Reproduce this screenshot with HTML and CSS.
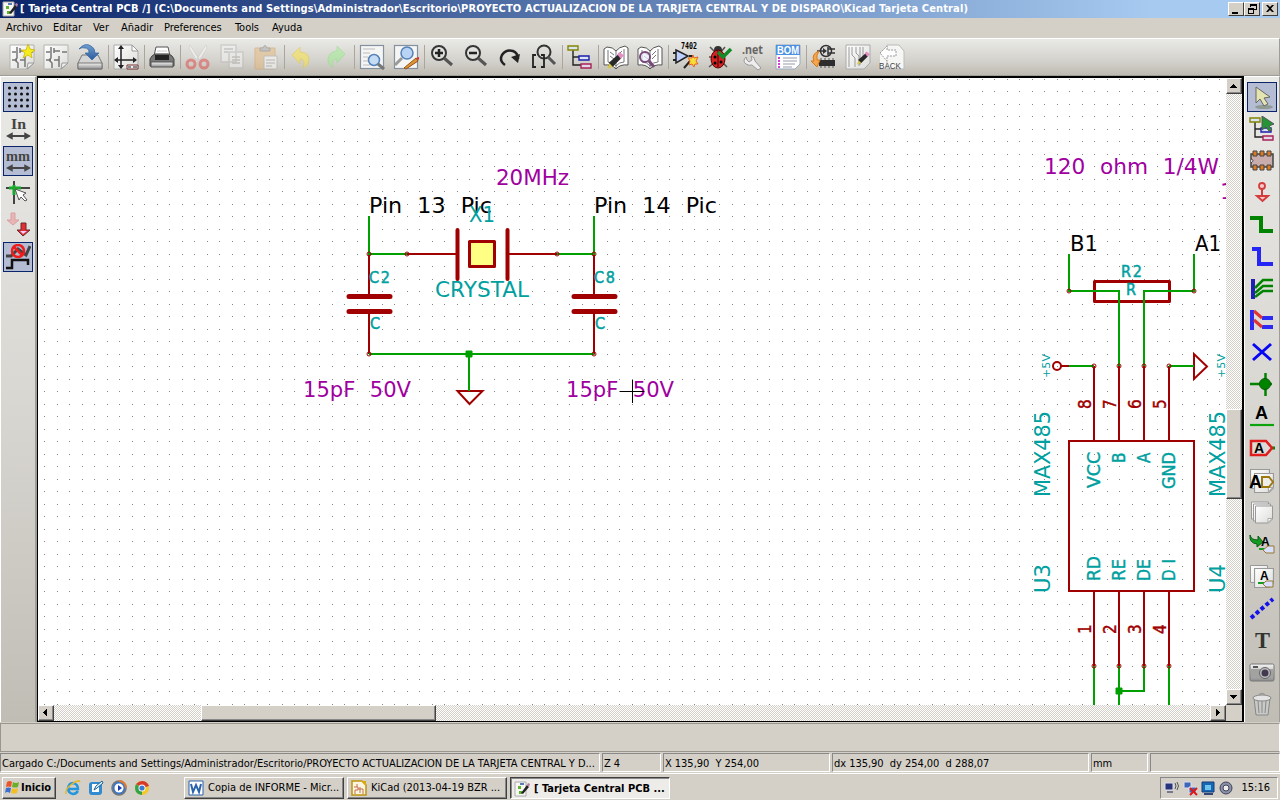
FILE: index.html
```html
<!DOCTYPE html>
<html lang="es">
<head>
<meta charset="utf-8">
<title>Tarjeta Central PCB</title>
<link rel="stylesheet" href="styles.css">
</head>
<body>
<svg class="defs" width="0" height="0">
  <defs>
    <linearGradient id="paper" x1="0" y1="0" x2="1" y2="1"><stop offset="0" stop-color="#fff"/><stop offset="1" stop-color="#dcdcda"/></linearGradient>
    <linearGradient id="metal" x1="0" y1="0" x2="0" y2="1"><stop offset="0" stop-color="#f4f4f4"/><stop offset="1" stop-color="#8d8d8d"/></linearGradient>
    <linearGradient id="blue" x1="0" y1="0" x2="0" y2="1"><stop offset="0" stop-color="#729fcf"/><stop offset="1" stop-color="#2a5a9c"/></linearGradient>
    <symbol id="sheet" viewBox="0 0 26 26"><path d="M1 1h18l6 6v18H1z" fill="url(#paper)" stroke="#aaa"/><path d="M19 1v6h6z" fill="#fff" stroke="#999"/></symbol>
    <symbol id="schem" viewBox="0 0 26 26"><path d="M1 1h24v18l-6 6H1z" fill="url(#paper)" stroke="#b2b2ae"/><path d="M3 8h4M3 16h5M8 3v7M11 4v5M11 7h6M8 10v4l-2 2 3 3v5M11 16h5v-4M16 16v7M19 8h5" fill="none" stroke="#777" stroke-width="1.5"/><path d="M25 19l-7 6 1-6z" fill="#eee" stroke="#999"/></symbol>
    <symbol id="tree" viewBox="0 0 26 26"><path d="M6 6v15h9M6 13h8" fill="none" stroke="#222" stroke-width="1.4"/><path d="M1 2h10v4H1z" fill="#d6e4f6" stroke="#848400" stroke-width="1.4"/><path d="M12 12h10v4H12z" fill="#d6e4f6" stroke="#1c1cac" stroke-width="1.4"/><path d="M14 20h10v4H14z" fill="#e5d6e8" stroke="#a62358" stroke-width="1.4"/></symbol>
    <symbol id="lens" viewBox="0 0 26 26"><circle cx="10" cy="9" r="7" fill="#e4e4e2" fill-opacity=".6" stroke="#363636" stroke-width="2"/><path d="M15 14l8 7" stroke="#555" stroke-width="3"/></symbol>
    <symbol id="book" viewBox="0 0 26 26"><path d="M1 5l3-2q6 0 9 4 3-4 9-5l3 2v17q-8-1-12 4-4-5-12-4z" fill="#fff" stroke="#555"/><path d="M13 7v17M5 6v12q5 0 8 4 3-4 8-4V5M7 8l4 3M7 12l4 3M19 7l-4 4M19 11l-4 4" fill="none" stroke="#777"/></symbol>
    <symbol id="pencil" viewBox="0 0 16 16"><path d="M2 14l1-5 8-7 3 3-8 8z" fill="#292929"/><path d="M10 2l2-2 4 3-3 3z" fill="#e58bc1"/><path d="M1 15l2-5 3 3z" fill="#d9cb4a"/></symbol>
    <symbol id="arrows" viewBox="0 0 26 8"><path d="M0 4l7-4v3h12V0l7 4-7 4V5H7v3z" fill="#454545"/></symbol>
    <symbol id="doc" viewBox="0 0 18 18"><path d="M.5 .5h17v13l-4 4H.5z" fill="url(#paper)" stroke="#999"/><path d="M17 13l-4 4v-4z" fill="#fff" stroke="#aaa"/></symbol>
    <symbol id="eeschema" viewBox="0 0 16 16"><path d="M1 1h11v14H1z" fill="#f7f7f4" stroke="#aaa"/><path d="M6 2h4v2H6z" fill="#5a7bb5"/><path d="M4 5h3v3H4zM5 10h3v3H5z" fill="#62b331"/><path d="M7 12l6-8 2 2-6 7z" fill="#222"/><path d="M13 4l1-2 2 1-1 3z" fill="#b97aa5"/></symbol>
  </defs>
</svg>
<div class="screen">
  <header class="titlebar">
    <svg class="i16" viewBox="0 0 16 16"><use href="#eeschema"/></svg>
    <span class="caption">[ Tarjeta Central PCB /] (C:\Documents and Settings\Administrador\Escritorio\PROYECTO ACTUALIZACION DE LA TARJETA CENTRAL Y DE DISPARO\Kicad Tarjeta Central)</span>
    <div class="winbtns">
      <b class="winbtn"><svg viewBox="0 0 12 10"><path d="M2 8h6v2H2z"/></svg></b>
      <b class="winbtn"><svg viewBox="0 0 12 10"><path d="M4 0h7v6H8V5h2V2H5v1H4zM2 4h6v6H2zM3 6v3h4V6z" fill-rule="evenodd"/></svg></b>
      <b class="winbtn close"><svg viewBox="0 0 12 10"><path d="M2 1h2l2 2 2-2h2L7 4.500 10 8H8L6 6 4 8H2l3-3.500z"/></svg></b>
    </div>
  </header>
  <nav class="menubar"><span class="m1">Archivo</span><span class="m2">Editar</span><span class="m3">Ver</span><span class="m4">Añadir</span><span class="m5">Preferences</span><span class="m6">Tools</span><span class="m7">Ayuda</span></nav>
  <div class="toolbar">
    <svg viewBox="0 0 26 26"><use href="#schem"/><path d="M19 0l2 5 5 1-4 3 1 5-4-3-5 3 2-5-4-3h5z" fill="#f6ec1c" stroke="#c3b000" stroke-width=".7"/></svg>
    <svg viewBox="0 0 26 26"><use href="#schem"/></svg>
    <svg viewBox="0 0 26 26"><path d="M5 11h16l4 8v6H1v-6z" fill="#d5d5d5" stroke="#777"/><path d="M1 19h24v6H1z" fill="url(#metal)" stroke="#777"/><path d="M2 5Q8-2 14 2q4 2 4 7h4l-7 7-7-7h4q0-5-4-5-3-1-6 1z" fill="url(#blue)" stroke="#3465a4" stroke-width=".7"/></svg>
    <i class="sep"></i>
    <svg viewBox="0 0 26 26"><use href="#sheet"/><path d="M8 3v21M3 16h20" stroke="#222" stroke-width="1.500"/><path d="M8 1l3 4H5zM8 25l3-4H5zM1 16l4-3v6zM24 16l-4-3v6z" fill="#222"/><path d="M14 21h11v4H14z" fill="#eee" stroke="#733"/><path d="M15 23h3m2 0h4" stroke="#222"/></svg>
    <i class="sep"></i>
    <svg viewBox="0 0 26 26"><path d="M7 3h12l2 9H5z" fill="#fff" stroke="#555"/><path d="M8 7h10M7 10h12" stroke="#ccc"/><path d="M3 12l3-2h14l3 2 2 3v7H1v-7z" fill="#777" stroke="#444"/><path d="M6 11h14v5H6z" fill="#222"/><path d="M2 18h22v5H2z" fill="url(#metal)" stroke="#555"/></svg>
    <i class="sep"></i>
    <svg class="dim" viewBox="0 0 26 26"><path d="M5 1l11 17-3 1L4 4zM21 1L10 18l3 1 9-15z" fill="#fff" stroke="#ccc"/><circle cx="6" cy="20" r="4" fill="none" stroke="#e04444" stroke-width="3"/><circle cx="19" cy="20" r="4" fill="none" stroke="#e04444" stroke-width="3"/></svg>
    <svg class="dim" viewBox="0 0 26 26"><path d="M2 1h15v17H2zM10 8h14v16H10z" fill="#f6f6f6" stroke="#bbb" stroke-width="1.500"/><path d="M5 5h9M5 8h4M13 13h8M13 16h8M13 19h8" stroke="#aaa" stroke-width="1.500"/></svg>
    <svg class="dim" viewBox="0 0 26 26"><path d="M2 4h20v21H2z" fill="#e8b97a" stroke="#cf9c58"/><path d="M7 7V4h3q2-5 4 0h3v3z" fill="#aaa" stroke="#777"/><path d="M11 12h13v13H11z" fill="#fff" stroke="#aaa"/><path d="M13 16h9m-9 3h9m-9 3h6" stroke="#999"/></svg>
    <i class="sep"></i>
    <svg class="dim undo" viewBox="0 0 26 26"><path d="M5 11L13 3v5q9 0 9 8 0 5-6 8 3-9-3-9v5z" fill="#ffe53b" stroke="#e5cb31"/></svg>
    <svg class="dim" viewBox="0 0 26 26"><path d="M22 10L14 2v5Q5 8 5 16q0 5 5 7-2-8 4-8v4z" fill="#9bf08d" stroke="#8bdc82"/></svg>
    <i class="sep"></i>
    <svg viewBox="0 0 26 26"><rect x="1.500" y="1.500" width="23" height="23" fill="#f5f5f4" stroke="#8492a0" stroke-width="1.200"/><path d="M4 5h12M4 9h7M4 13h5M4 17h6M4 21h7" stroke="#bbb" stroke-width="1.200"/><circle cx="15" cy="16" r="5.500" fill="#c6dcf4" stroke="#5381b8" stroke-width="1.500"/><path d="M19 20l6 5" stroke="#777" stroke-width="3"/></svg>
    <svg viewBox="0 0 26 26"><rect x="1.500" y="1.500" width="23" height="23" fill="#f5f5f4" stroke="#8492a0" stroke-width="1.200"/><circle cx="14" cy="9" r="6" fill="#b8d3f3" stroke="#5381b8" stroke-width="1.500"/><path d="M9 14l-7 7" stroke="#999" stroke-width="3"/><path d="M11 24L23 14l2 3-12 8z" fill="#dc9635" stroke="#965017"/><path d="M23 14l3-1v3z" fill="#e22"/></svg>
    <i class="sep"></i>
    <svg viewBox="0 0 26 26"><use href="#lens"/><path d="M6 9h8M10 5v8" stroke="#222" stroke-width="2.500"/></svg>
    <svg viewBox="0 0 26 26"><use href="#lens"/><path d="M6 9h8" stroke="#222" stroke-width="2.500"/></svg>
    <svg viewBox="0 0 26 26"><path d="M8 21Q2 17 5 11q4-6 11-4 5 2 5 8" fill="none" stroke="#222" stroke-width="2.500"/><path d="M14 13l7 6 2-9z" fill="#222"/></svg>
    <svg viewBox="0 0 26 26"><circle cx="13" cy="8" r="6.500" fill="none" stroke="#333" stroke-width="2"/><path d="M17 13l7 7" stroke="#555" stroke-width="3"/><path d="M5 11H2v12h3M10 11h3v12h-3" fill="none" stroke="#222" stroke-width="1.800"/></svg>
    <i class="sep"></i>
    <svg viewBox="0 0 26 26"><use href="#tree"/></svg>
    <i class="sep"></i>
    <svg viewBox="0 0 26 26"><use href="#book"/><use href="#pencil" x="3" y="8" width="18" height="18"/></svg>
    <svg viewBox="0 0 26 26"><use href="#book"/><circle cx="8" cy="13" r="5" fill="#eef" fill-opacity=".7" stroke="#764a78" stroke-width="2"/><path d="M12 17l5 6" stroke="#764a78" stroke-width="3"/></svg>
    <i class="sep"></i>
    <svg viewBox="0 0 26 26"><path d="M3 6l12 6-12 7z" fill="#bdd0ff" stroke="#222" stroke-width="1.500"/><path d="M0 9h3m-3 7h3M16 12h4M11 24l7-8" stroke="#222" stroke-width="2"/><path d="M20 11l1 3 4-1-2 4 2 3h-3l-1 3-2-3-3 1 1-4-2-3h4z" fill="#f7dd35" stroke="#e66124"/><text x="8" y="5" class="tiny" textLength="16" lengthAdjust="spacingAndGlyphs">7402</text></svg>
    <svg viewBox="0 0 26 26"><path d="M3 3l5 5M18 3l-4 5M2 13h6M2 23l6-5M20 23l-5-5" stroke="#555" stroke-width="1.500"/><circle cx="11" cy="6" r="4" fill="#333"/><ellipse cx="11" cy="15" rx="7" ry="9" fill="#d52222" stroke="#500"/><path d="M11 7v16" stroke="#300"/><circle cx="8" cy="13" r="1.500"/><circle cx="8" cy="19" r="1.500"/><circle cx="14" cy="18" r="1.500"/><path d="M11 8l5 5 8-8" fill="none" stroke="#148a28" stroke-width="3.500"/></svg>
    <svg viewBox="0 0 26 26"><text x="1" y="10" class="net" textLength="21" lengthAdjust="spacingAndGlyphs">.net</text><path d="M5 13q-4 4 0 7 3 2 6 1l6 5 3-2-6-7q0-4-4-5l1 4-3 2-2-2z" fill="#eee" stroke="#999"/></svg>
    <svg viewBox="0 0 26 26"><path d="M1 1h24v19l-5 5H1z" fill="#fff" stroke="#9ab"/><path d="M1 1h24v10H1z" fill="#4c91e2"/><text x="2" y="10" class="bom" textLength="22" lengthAdjust="spacingAndGlyphs">BOM</text><path d="M3 14h2m-2 3h2m-2 3h2m-2 3h2" stroke="#c0c" stroke-width="1.500"/><path d="M8 14h14M8 17h14M8 20h12M8 23h9" stroke="#99a"/></svg>
    <i class="sep"></i>
    <svg viewBox="0 0 26 26"><circle cx="15" cy="7" r="5.500" fill="#ddd" stroke="#333" stroke-width="1.500"/><path d="M6 7h6M17 5h7M17 9h7M17 3v8" fill="none" stroke="#333" stroke-width="1.500"/><path d="M12 4v6l4-3z" fill="#333"/><path d="M8 16h16v6H8z" fill="#2d2d2d"/><path d="M10 22v2m4-2v2m4-2v2m4-2v2M10 14v2m4-2v2m4-2v2m4-2v2" stroke="#555"/><path d="M8 7Q0 10 3 17L0 17l6 6 3-7H6q-1-5 2-9z" fill="#f3a64e" stroke="#d57918"/></svg>
    <svg viewBox="0 0 26 26"><path d="M1 1h24v18l-6 6H1z" fill="url(#paper)" stroke="#aaa"/><path d="M4 3v20M7 3v8l3 3v9M11 3v6l3 3v10M15 3v18M18 3v12" fill="none" stroke="#999"/><use href="#pencil" x="11" y="6" width="14" height="17"/></svg>
    <svg viewBox="0 0 26 26"><path d="M8 1h12l5 6v18H1V11z" fill="#f6f6f5"/><path d="M20 1l5 6v18H8V17M20 1H8v4" fill="none" stroke="#bbb"/><path d="M1 9l7-7v4h9v6H8v5z" fill="#fff" stroke="#999" stroke-dasharray="2 1"/><text x="0" y="25" class="back" textLength="22" lengthAdjust="spacingAndGlyphs">BACK</text></svg>
  </div>
  <main class="work">
    <aside class="side left">
      <b class="tool on"><svg viewBox="0 0 26 26"><path d="M4.500 4h18.100M4.500 10h18.100M4.500 16h18.100M4.500 22h18.100" stroke="#111" stroke-width="3" stroke-linecap="round" stroke-dasharray="0 6"/></svg></b>
      <b class="tool"><svg viewBox="0 0 26 26"><text x="6" y="13" class="unit" textLength="15" lengthAdjust="spacingAndGlyphs">In</text><use href="#arrows" x="1" y="16" width="25" height="8"/></svg></b>
      <b class="tool on"><svg viewBox="0 0 26 26"><text x="1" y="13" class="unit" textLength="24" lengthAdjust="spacingAndGlyphs">mm</text><use href="#arrows" x="1" y="16" width="25" height="8"/></svg></b>
      <b class="tool"><svg viewBox="0 0 26 26"><path d="M9 1v23M1 8h24" stroke="#444" stroke-width="2"/><path d="M9 5v10M4 8h12" stroke="#18a82b" stroke-width="3"/><path d="M10 9l11 4-3 2 4 5-2 1-4-4-2 3z" fill="#fff" stroke="#555"/></svg></b>
      <b class="tool"><svg viewBox="0 0 26 26"><path d="M6 1h4v7h4l-6 5-6-5h4z" fill="#e8b4b4" stroke="#d7a1a1"/><path d="M16 11h5v7h4l-7 6-6-6h4z" fill="#e22d32" stroke="#672b2b"/><path d="M15 19h7l-4 3z" fill="#f0caff"/></svg></b>
      <b class="tool on"><svg viewBox="0 0 26 26"><path d="M1 12h5l7-7 8 6 4-9" fill="none" stroke="#444" stroke-width="3"/><path d="M1 24h6v-8h16v5" fill="none" stroke="#111" stroke-width="2.500"/><circle cx="13" cy="7" r="6" fill="none" stroke="#ef1c1c" stroke-width="2.500"/><path d="M9 3l8 8" stroke="#ef1c1c" stroke-width="2.500"/></svg></b>
    </aside>
    <section class="view">
      <svg class="schematic" viewBox="38 78 1188 627">
        <defs><pattern id="grid" width="25" height="25" patternUnits="userSpaceOnUse"><path d="M19 4h1v1h-1zM7 4h1v1H7zM19 16h1v1h-1zM7 16h1v1H7z" fill="#848484"/></pattern></defs>
        <path d="M38 78h1188v627H38z" fill="url(#grid)" shape-rendering="crispEdges"/>
        <g class="part">
          <path d="M369 254v40M369 313v41M594 254v40M594 313v41M407 254h50M507 254h50M1069 366h-8M1094 366v75M1119 366v75M1144 366v75M1169 366v75M1094 591v75M1119 591v75M1144 591v75M1169 591v75M1069 441h125v150h-125z"/>
          <path class="plate" d="M349 296.500h41M349 311.500h41M574 296.500h41M574 311.500h41"/>
          <path class="thick" d="M457.500 230v49M507.500 230v49"/>
          <path class="body" d="M469.500 241.500h25v25h-25z"/>
          <path class="res" d="M1094.500 281.500h75v20h-75z"/>
          <path d="M457.500 391h25L469.500 404zM1194 354v25l13-12.500z"/>
          <circle cx="1057" cy="366" r="4"/>
        </g>
        <path class="wire" d="M369 216v38h38M557 254h37v-38M369 354h225M469 354v37M1069 254v37h50v75M1194 254v37h-50v75M1069 366h25M1169 366h25M1094 666v39M1119 666v39M1144 666v25h-25M1169 666v39"/>
        <path class="joint" d="M466 351h6v6h-6zM1116 688h6v6h-6z"/>
        <g class="ends"><circle cx="369" cy="254" r="2"/><circle cx="407" cy="254" r="2"/><circle cx="557" cy="254" r="2"/><circle cx="594" cy="254" r="2"/><circle cx="369" cy="354" r="2"/><circle cx="594" cy="354" r="2"/><circle cx="1069" cy="291" r="2"/><circle cx="1194" cy="291" r="2"/><circle cx="1094" cy="366" r="2"/><circle cx="1119" cy="366" r="2"/><circle cx="1144" cy="366" r="2"/><circle cx="1169" cy="366" r="2"/><circle cx="1094" cy="666" r="2"/><circle cx="1119" cy="666" r="2"/><circle cx="1144" cy="666" r="2"/><circle cx="1169" cy="666" r="2"/></g>
        <g class="note">
          <text x="496" y="185" textLength="73" lengthAdjust="spacingAndGlyphs">20MHz</text>
          <text x="303" y="397" textLength="108" lengthAdjust="spacingAndGlyphs">15pF 50V</text>
          <text x="566" y="397" textLength="108" lengthAdjust="spacingAndGlyphs">15pF 50V</text>
          <text x="1044" y="174" textLength="175" lengthAdjust="spacingAndGlyphs">120 ohm 1/4W</text>
          <text x="1220" y="199">1</text>
        </g>
        <g class="label">
          <text x="369" y="213" textLength="123" lengthAdjust="spacingAndGlyphs">Pin 13 Pic</text>
          <text x="594" y="213" textLength="123" lengthAdjust="spacingAndGlyphs">Pin 14 Pic</text>
          <text x="1070" y="251" textLength="28" lengthAdjust="spacingAndGlyphs">B1</text>
          <text x="1195" y="251" textLength="26" lengthAdjust="spacingAndGlyphs">A1</text>
        </g>
        <g class="field">
          <text x="469" y="222" textLength="26" lengthAdjust="spacingAndGlyphs">X1</text>
          <text x="435" y="297" textLength="94" lengthAdjust="spacingAndGlyphs">CRYSTAL</text>
          <g class="small"><text x="369" y="283" textLength="21">C2</text><text x="594" y="283" textLength="21">C8</text><text x="370" y="329">C</text><text x="595" y="329">C</text><text x="1121" y="277" textLength="21">R2</text><text x="1126" y="295">R</text></g>
          <g class="power"><text transform="translate(1050 378) rotate(-90)" textLength="24">+5V</text><text transform="translate(1225 378) rotate(-90)" textLength="24">+5V</text></g>
          <text transform="translate(1050 497) rotate(-90)" textLength="86" lengthAdjust="spacingAndGlyphs">MAX485</text>
          <text transform="translate(1225 497) rotate(-90)" textLength="86" lengthAdjust="spacingAndGlyphs">MAX485</text>
          <text transform="translate(1050 593) rotate(-90)" textLength="29" lengthAdjust="spacingAndGlyphs">U3</text>
          <text transform="translate(1225 593) rotate(-90)" textLength="29" lengthAdjust="spacingAndGlyphs">U4</text>
          <g class="pin">
            <text transform="translate(1100 488) rotate(-90)" textLength="36" lengthAdjust="spacingAndGlyphs">VCC</text>
            <text transform="translate(1125 463) rotate(-90)">B</text>
            <text transform="translate(1150 463) rotate(-90)">A</text>
            <text transform="translate(1175 489) rotate(-90)" textLength="37" lengthAdjust="spacingAndGlyphs">GND</text>
            <text transform="translate(1100 581) rotate(-90)" textLength="25" lengthAdjust="spacingAndGlyphs">RD</text>
            <text transform="translate(1125 581) rotate(-90)" textLength="22" lengthAdjust="spacingAndGlyphs">RE</text>
            <text transform="translate(1150 581) rotate(-90)" textLength="22" lengthAdjust="spacingAndGlyphs">DE</text>
            <text transform="translate(1175 581) rotate(-90)" textLength="22" lengthAdjust="spacing">DI</text>
          </g>
        </g>
        <g class="num">
          <text transform="translate(1091 409) rotate(-90)">8</text><text transform="translate(1116 409) rotate(-90)">7</text><text transform="translate(1141 409) rotate(-90)">6</text><text transform="translate(1166 409) rotate(-90)">5</text>
          <text transform="translate(1091 634) rotate(-90)">1</text><text transform="translate(1116 634) rotate(-90)">2</text><text transform="translate(1141 634) rotate(-90)">3</text><text transform="translate(1166 634) rotate(-90)">4</text>
        </g>
        <path class="cursor" d="M620 391.500h24M632.500 380v23"/>
      </svg>
      <div class="vscroll"><b class="sbtn"><svg viewBox="0 0 14 14"><path d="M3 9h7v-1H9V7H8V6H7V5H6v1H5v1H4v1H3z"/></svg></b><b class="vthumb"></b><b class="sbtn end"><svg viewBox="0 0 14 14"><path d="M3 5h7v1H9v1H8v1H7v1H6V8H5V7H4V6H3z"/></svg></b></div>
      <div class="hscroll"><b class="sbtn"><svg viewBox="0 0 14 14"><path d="M8 3v7H7V9H6V8H5V7H4V6h1V5h1V4h1V3z"/></svg></b><b class="hthumb"></b><b class="sbtn end"><svg viewBox="0 0 14 14"><path d="M5 3v7h1V9h1V8h1V7h1V6H8V5H7V4H6V3z"/></svg></b></div>
      <div class="corner"></div>
    </section>
    <aside class="side right">
      <b class="tool on"><svg viewBox="0 0 26 26"><ellipse cx="15" cy="23" rx="9" ry="2" fill="#8e9a92"/><path d="M7 3l14 10-6 1 4 6-4 2-4-7-4 4z" fill="#e4e4b0" stroke="#666"/></svg></b>
      <b class="tool"><svg viewBox="0 0 26 26"><use href="#tree"/><path d="M13 0l12 8-5 2 3 4-3 1-3-4-4 3z" fill="#249436" stroke="#555"/></svg></b>
      <b class="tool"><svg viewBox="0 0 26 26"><path d="M2 6h22v13H2z" fill="#c9adad" stroke="#444" stroke-width="1.500"/><g fill="#df7a1e" stroke="#444"><path d="M4 3h4v5H4zM11 3h4v5h-4zM18 3h4v5h-4zM4 17h4v5H4zM11 17h4v5h-4zM18 17h4v5h-4z"/></g><path d="M2 11q4 1 0 4" fill="#ddd" stroke="#444"/></svg></b>
      <b class="tool"><svg viewBox="0 0 26 26"><circle cx="13" cy="6" r="3" fill="#f7caca" stroke="#d33d3d" stroke-width="1.800"/><path d="M13 9v8M8 16h11l-5.500 5z" fill="#f7caca" stroke="#d33d3d" stroke-width="2"/></svg></b>
      <b class="tool"><svg viewBox="0 0 26 26"><path d="M1 6h11v13h12" fill="none" stroke="#008400" stroke-width="4"/></svg></b>
      <b class="tool"><svg viewBox="0 0 26 26"><path d="M3 5h7v15h14" fill="none" stroke="#2525f5" stroke-width="4"/></svg></b>
      <b class="tool"><svg viewBox="0 0 26 26"><path d="M4 3v20" stroke="#2020b8" stroke-width="4"/><path d="M6 12l8-8h10M6 17l8-7h10M6 21l8-6h10" fill="none" stroke="#008400" stroke-width="2.500"/></svg></b>
      <b class="tool"><svg viewBox="0 0 26 26"><path d="M3 2v20M13 10h11M13 19h11" stroke="#2b2bf4" stroke-width="4"/><path d="M5 3l8 7M5 12l8 7" stroke="#df3434" stroke-width="3"/></svg></b>
      <b class="tool"><svg viewBox="0 0 26 26"><path d="M4 4l18 16M22 4L4 20" stroke="#0606f4" stroke-width="3"/></svg></b>
      <b class="tool"><svg viewBox="0 0 26 26"><path d="M1 12h22M16.500 1v23" stroke="#008400" stroke-width="2.500"/><circle cx="16" cy="12" r="5.500" fill="#008400" stroke="#055c05"/></svg></b>
      <b class="tool"><svg viewBox="0 0 26 26"><text x="6" y="15" class="letter" textLength="13">A</text><path d="M1 21h24" stroke="#0ca30c" stroke-width="2.200"/></svg></b>
      <b class="tool"><svg viewBox="0 0 26 26"><path d="M22 12h4" stroke="#008400" stroke-width="3"/><path d="M2 5h15l6 7-6 7H2z" fill="#fff" fill-opacity=".2" stroke="#e01c1c" stroke-width="2.500"/><text x="5" y="17" class="letter md">A</text></svg></b>
      <b class="tool"><svg viewBox="0 0 26 26"><use href="#doc" x="1" y="0" width="20" height="22"/><use href="#doc" x="5" y="4" width="20" height="22"/><text x="0" y="20" class="letter">A</text><path d="M13 9h7l4 5-4 5h-7z" fill="#eee" stroke="#9c7a10" stroke-width="2"/></svg></b>
      <b class="tool"><svg viewBox="0 0 26 26"><use href="#doc" x="2" y="1" width="18" height="19"/><use href="#doc" x="4" y="3" width="18" height="19"/><use href="#doc" x="6" y="5" width="18" height="19"/></svg></b>
      <b class="tool"><svg viewBox="0 0 26 26"><path d="M1 3q1 5 8 5V4l5 6-6 5v-3Q0 11 1 3z" fill="#139c22" stroke="#075b12"/><text x="12" y="14" class="letter sm">A</text><path d="M10 17h6" stroke="#139c22" stroke-width="2"/><path d="M19 14h6v7h-8l-3-3z" fill="#d9dfff" stroke="#99782d"/></svg></b>
      <b class="tool"><svg viewBox="0 0 26 26"><use href="#doc" x="1" y="1" width="18" height="18"/><use href="#doc" x="5" y="4" width="20" height="20"/><text x="11" y="16" class="letter sm">A</text><path d="M9 19h6" stroke="#139c22" stroke-width="2"/><path d="M17 17h7v6h-7l-3-3z" fill="#d9dfff" stroke="#99782d"/></svg></b>
      <b class="tool"><svg viewBox="0 0 26 26"><path d="M2 22L24 3" stroke="#1414e8" stroke-width="4" stroke-dasharray="4 2.500"/></svg></b>
      <b class="tool"><svg viewBox="0 0 26 26"><text x="6" y="20" class="tee" textLength="15" lengthAdjust="spacingAndGlyphs">T</text></svg></b>
      <b class="tool"><svg viewBox="0 0 26 26"><rect x="1" y="4" width="24" height="17" rx="1.500" fill="url(#metal)" stroke="#777"/><path d="M2 9h22v8H2z" fill="#a2a2a0"/><circle cx="16" cy="13" r="5.500" fill="#bbb" stroke="#666"/><circle cx="16" cy="13" r="3.500" fill="#423950"/><path d="M4 6h5v2H4z" fill="#555"/></svg></b>
      <b class="tool"><svg viewBox="0 0 26 26"><path d="M5 6h16l-2 17H7z" fill="#c9c9c7" stroke="#888"/><path d="M9 9l1 12M13 9v12M17 9l-1 12" stroke="#888"/><ellipse cx="13" cy="6" rx="9" ry="3" fill="#e4e4e4" stroke="#888"/><path d="M10 3q3-3 6 0" fill="none" stroke="#999" stroke-width="1.500"/></svg></b>
    </aside>
  </main>
  <div class="msgpanel"></div>
  <div class="statusbar"><span class="s1">Cargado C:/Documents and Settings/Administrador/Escritorio/PROYECTO ACTUALIZACION DE LA TARJETA CENTRAL Y D...</span><span class="s2">Z 4</span><span class="s3">X 135,90&nbsp; Y 254,00</span><span class="s4">dx 135,90&nbsp; dy 254,00&nbsp; d 288,07</span><span class="s5">mm</span><span class="s6"></span></div>
  <footer class="taskbar">
    <b class="start"><svg class="i16" viewBox="0 0 16 16"><path d="M3 2q3-2 5 0L7 7Q4 6 2 7z" fill="#e9562b"/><path d="M9 2q3 2 6 0l-1 5q-3 1-6 0z" fill="#6bae2b"/><path d="M2 8q3-1 5 0l-1 5q-3-2-5 0z" fill="#3b70d2"/><path d="M8 8q3 2 6 0l-1 5q-3 1-6 0z" fill="#f3bd25"/></svg><span>Inicio</span></b>
    <div class="quick">
      <svg viewBox="0 0 16 16"><path d="M13 11q-2 3-5 3-5-1-5-6 1-5 5-5 5 1 5 6H4" fill="none" stroke="#2496dd" stroke-width="2.500"/><path d="M1 14Q0 9 7 4t8-2" fill="none" stroke="#e6b725" stroke-width="1.500"/></svg>
      <svg viewBox="0 0 16 16"><rect x="1" y="2" width="13" height="13" rx="3" fill="#328bd0"/><path d="M4 4h7v8H4z" fill="#fff"/><path d="M6 10l2-4 6-5 1 2-6 5z" fill="#e9f6ff" stroke="#176194"/></svg>
      <svg viewBox="0 0 16 16"><circle cx="8" cy="8" r="7" fill="#3977c9" stroke="#777" stroke-width="1.500"/><path d="M8 1a7 7 0 0 1 7 7" stroke="#e17a2e" stroke-width="2" fill="none"/><circle cx="8" cy="8" r="4.500" fill="#fff"/><path d="M7 5l4 3-4 3z" fill="#173cb5"/></svg>
      <svg viewBox="0 0 16 16"><circle cx="8" cy="8" r="7" fill="#f4c927"/><path d="M8 8L2 4Q5 1 8 1q5 0 7 5z" fill="#d83a29"/><path d="M2 4L8 9v6Q1 14 1 8q0-2 1-4z" fill="#32a34a"/><circle cx="8" cy="8" r="3.500" fill="#fff"/><circle cx="8" cy="8" r="2.600" fill="#3d7bd3"/></svg>
    </div>
    <b class="task"><svg class="i16" viewBox="0 0 16 16"><path d="M1 1h14v14H1z" fill="#fff" stroke="#2a62ac"/><path d="M3 4l2 8 3-7 3 7 2-8" fill="none" stroke="#2a62ac" stroke-width="2"/></svg><span>Copia de INFORME - Micr...</span></b>
    <b class="task kicad"><svg class="i16" viewBox="0 0 16 16"><path d="M1 1h10l4 4v10H1z" fill="#f9f5df" stroke="#bd940d" stroke-width="1.500"/><path d="M10 1h5v5z" fill="#d8aa12"/><path d="M3 7h4v3H4v4M6 4v3M7 9h5v5M9 7v6" fill="none" stroke="#c36f53"/></svg><span>KiCad (2013-04-19 BZR ...</span></b>
    <b class="task active"><svg class="i16" viewBox="0 0 16 16"><use href="#eeschema"/></svg><span>[ Tarjeta Central PCB ...</span></b>
    <div class="tray">
      <svg viewBox="0 0 16 16"><path d="M1 3h8v7H1z" fill="#26357b" stroke="#dde"/><path d="M3 12h6" stroke="#778" stroke-width="2"/><path d="M11 3q2 3 0 6M13 2q3 4 0 8" fill="none" stroke="#555"/></svg>
      <svg viewBox="0 0 16 16"><path d="M2 2h7v6H2zM7 7h7v6H7z" fill="#3d67b7" stroke="#dde"/><path d="M8 8l7 7M15 8l-7 7" stroke="#dc1818" stroke-width="2"/></svg>
      <svg viewBox="0 0 16 16"><path d="M2 2h12v10H2z" fill="#1768b4" stroke="#173e79"/><path d="M5 5h6v5H5z" fill="#6fc4ed"/><path d="M4 14h9" stroke="#347" stroke-width="2"/></svg>
      <svg viewBox="0 0 16 16"><circle cx="8" cy="8" r="6" fill="#888faa" stroke="#445"/><circle cx="8" cy="8" r="3" fill="#eee" stroke="#445"/></svg>
      <time>15:16</time>
    </div>
  </footer>
</div>
</body>
</html>
```
FILE: styles.css
```css
* { box-sizing: border-box; }
body { margin: 0; background: #d4d0c8; color: #000; font: 11px/14px "DejaVu Sans Condensed", "DejaVu Sans", sans-serif; font-stretch: condensed; }
b { font-weight: normal; }
.defs { display: block; height: 0; }
.screen { display: flex; flex-direction: column; width: 1280px; height: 800px; overflow: hidden; white-space: nowrap; }
.i16 { width: 16px; height: 16px; flex: none; }
.titlebar { display: flex; align-items: center; flex: none; height: 18px; padding: 0 2px; background: linear-gradient(90deg, #0a246a, #a6caf0 90%); color: #fff; font-weight: bold; }
.caption { flex: 1; margin-left: 2px; letter-spacing: .125px; }
.winbtns { display: flex; }
.winbtn { display: flex; width: 16px; height: 14px; padding: 1px; background: #d4d0c8; border: 1px solid; border-color: #fff #404040 #404040 #fff; }
.winbtn svg { width: 12px; height: 10px; }
.close { margin-left: 2px; }
.menubar { display: flex; flex: none; gap: 12px; height: 20px; padding: 3px 6px; }
.m1 { width: 35px; } .m2 { width: 28px; } .m3 { width: 16px; } .m4 { width: 31px; } .m5 { width: 59px; } .m6 { width: 25px; } .m7 { width: 31px; }
.menubar span { letter-spacing: -.05px; }
.toolbar { display: flex; align-items: center; flex: none; height: 38px; padding: 0 5px; background: linear-gradient(#e9e9e6, #d2d0ca 65%, #bebab1); border: solid; border-width: 1px 1px 1px 0; border-color: #fff #a09d96 #a09d96; }
.toolbar svg { width: 26px; height: 26px; margin: 0 4px; flex: none; overflow: visible; }
.toolbar .undo { transform: translateX(-2px); }
.sep { width: 1px; height: 24px; margin: 0 0 0 1px; background: #aaa69e; flex: none; }
.dim { opacity: .5; }
.tiny { font: bold 8px "DejaVu Sans Mono", monospace; }
.net { font: bold 13px "Open Sans", sans-serif; fill: #666; }
.bom { font: bold 11px "Liberation Sans", sans-serif; fill: #fff; }
.back { font: 9px "Liberation Sans", sans-serif; fill: #444; }
.work { display: flex; flex: none; height: 646px; }
.side { display: flex; flex-direction: column; gap: 2px; flex: none; width: 37px; padding: 5px 0 0 3px; background: linear-gradient(#e9e9e6, #d9d7d2 50%, #c0bdb5); border-left: 1px solid #fff; border-top: 1px solid #fff; border-right: 2px solid #a09d96; }
.side.left { padding-left: 2px; }
.side.right { width: 36px; padding-left: 2px; border-right-width: 1px; }
.tool { display: flex; width: 30px; height: 30px; padding: 2px; flex: none; }
.tool svg { width: 26px; height: 26px; }
.tool.on { padding: 1px; background: #b4bdd3; border: 1px solid #0a246a; }
.unit { font: bold 15px "Liberation Serif", serif; fill: #444; }
.letter { font: bold 18px "Liberation Sans", sans-serif; }
.letter.md { font-size: 14px; }
.letter.sm { font-size: 12px; }
.tee { font: bold 23px "Liberation Serif", serif; fill: #333; }
.view { display: grid; grid-template: 627px 16px / 1188px 16px; width: 1207px; padding: 0 2px 0 0; background: #fff; border-left: 1px solid #000; border-top: 2px solid #000; border-right: 2px solid #000; border-bottom: 1px solid #000; }
.schematic { width: 1188px; height: 627px; background: #fff; overflow: hidden; }
.schematic text { font: 22px "DejaVu Sans", sans-serif; }
.part { fill: none; stroke: #a00000; stroke-width: 2; }
.part .plate { stroke-width: 5; stroke-linecap: round; }
.part .thick { stroke-width: 4; stroke-linecap: round; }
.part .body { fill: #ffff84; stroke-width: 3; stroke-linejoin: round; }
.part .res { stroke-width: 3; stroke-linejoin: round; }
.wire { fill: none; stroke: #00a000; stroke-width: 2; }
.joint { fill: #00a000; stroke: #00a000; stroke-linejoin: round; }
.ends { fill: none; stroke: #a00000; }
.note { fill: #a000a0; }
.label { fill: #000; }
.note text, .label text { word-spacing: 8px; }
.field { fill: #00a0a0; }
.schematic .small text { font-size: 16px; font-family: "DejaVu Sans Condensed", "DejaVu Sans", sans-serif; font-stretch: condensed; stroke: #00a0a0; stroke-width: .5; }
.schematic .power text { font-size: 11px; }
.schematic .pin text, .schematic .num text { font-size: 17px; font-family: "DejaVu Sans Condensed", "DejaVu Sans", sans-serif; font-stretch: condensed; }
.schematic .pin text { stroke: #00a0a0; stroke-width: .4; }
.num { fill: #a00000; stroke: #a00000; stroke-width: .4; }
.cursor { stroke: #000; fill: none; }
.vscroll, .hscroll { display: flex; background: conic-gradient(#fff 25%, #d4d0c8 0 50%, #fff 0 75%, #d4d0c8 0) 0 0 / 2px 2px; }
.vscroll { flex-direction: column; }
.sbtn, .vthumb, .hthumb { flex: none; background: #d4d0c8; border: 1px solid; border-color: #fff #404040 #404040 #fff; box-shadow: inset -1px -1px #888; }
.sbtn { width: 16px; height: 16px; }
.sbtn svg { display: block; width: 14px; height: 14px; }
.vthumb { width: 16px; height: 90px; margin-top: 315px; }
.hthumb { width: 235px; height: 16px; margin-left: 147px; }
.vscroll .end { margin-top: auto; }
.hscroll .end { margin-left: auto; }
.corner { background: #d4d0c8; }
.msgpanel { flex: none; height: 29px; margin-top: 1px; border: 1px solid #999690; border-right-color: #fff; }
.statusbar { display: flex; flex: none; gap: 2px; height: 20px; margin-top: 1px; }
.statusbar span { height: 19px; padding: 3px 1px 1px; overflow: hidden; border: 1px solid; border-color: #888 #fff #fff #888; letter-spacing: -.035px; }
.s1 { width: 600px; } .s2 { width: 59px; } .s3 { width: 167px; } .s4 { width: 257px; } .s5 { width: 57px; } .s6 { flex: 1; }
.taskbar { display: flex; flex: none; height: 27px; margin-top: 0; padding: 3px 2px 2px; border-top: 1px solid #fff; }
.start, .task { display: flex; align-items: center; gap: 4px; height: 22px; padding: 0 3px; border: 1px solid; border-color: #fff #404040 #404040 #fff; box-shadow: inset -1px -1px #888; }
.start { width: 54px; gap: 1px; padding: 0 1px; font-weight: bold; }
.quick { display: flex; gap: 7px; align-items: center; width: 128px; padding-left: 9px; }
.quick svg { width: 16px; height: 16px; }
.task { width: 160px; margin-right: 3px; overflow: hidden; }
.task span { letter-spacing: 0; }
.task.active { padding-top: 1px; font-weight: bold; border-color: #404040 #fff #fff #404040; box-shadow: inset 1px 1px #888; background: #eeece8; }
.tray { display: flex; align-items: center; gap: 2px; width: 118px; height: 22px; margin-left: auto; padding: 0 7px 0 3px; border: 1px solid; border-color: #888 #fff #fff #888; }
.tray svg { width: 16px; height: 16px; flex: none; }
.tray time { margin-left: auto; }
```
